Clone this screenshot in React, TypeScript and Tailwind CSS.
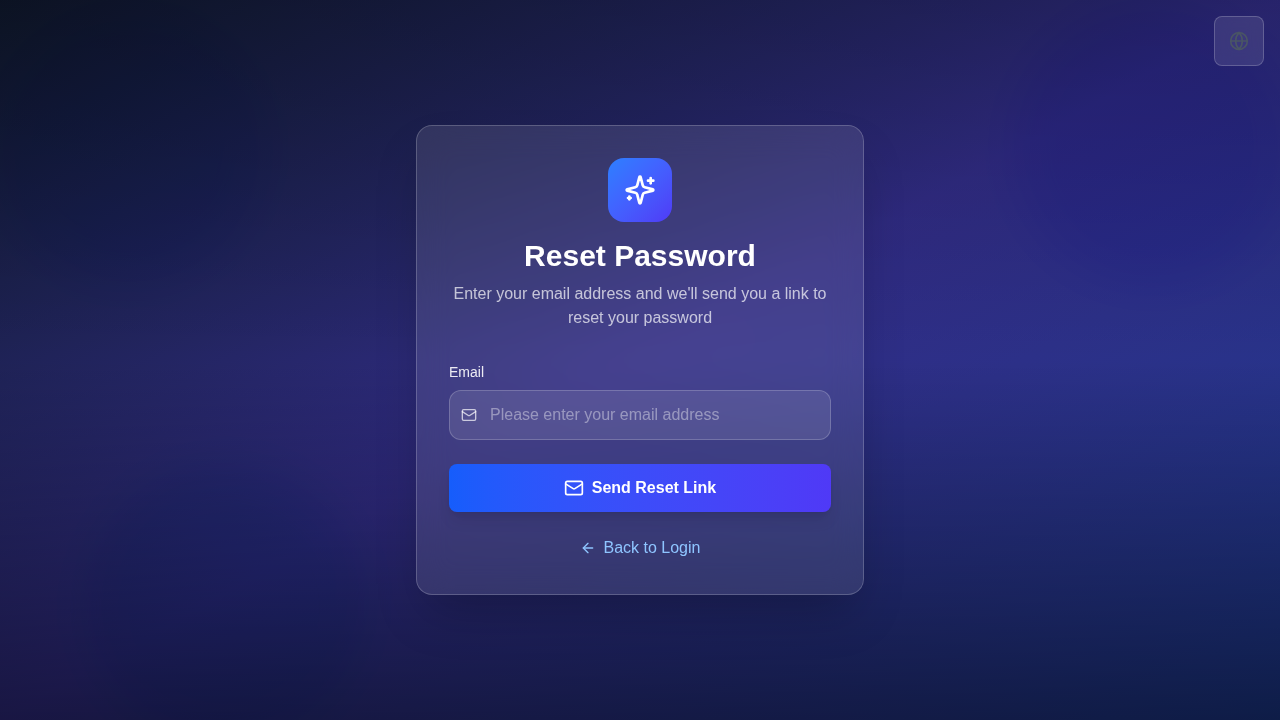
import { useState } from "react";
import { ArrowLeft, Globe, Mail } from "lucide-react";

function SparklesIcon() {
  return (
    <svg
      className="h-8 w-8 text-white"
      viewBox="0 0 24 24"
      fill="none"
      stroke="currentColor"
      strokeWidth={2}
      strokeLinecap="round"
      strokeLinejoin="round"
      aria-hidden="true"
    >
      <path d="M9.937 15.5A2 2 0 0 0 8.5 14.063l-6.135-1.582a.5.5 0 0 1 0-.962L8.5 9.936A2 2 0 0 0 9.937 8.5l1.582-6.135a.5.5 0 0 1 .963 0L14.063 8.5A2 2 0 0 0 15.5 9.937l6.135 1.581a.5.5 0 0 1 0 .964L15.5 14.063a2 2 0 0 0-1.437 1.437l-1.582 6.135a.5.5 0 0 1-.963 0z" />
      <path d="M20 3v4" />
      <path d="M22 5h-4" />
      <path d="M4 17v2" />
      <path d="M5 18H3" />
    </svg>
  );
}

function Backdrop() {
  return (
    <div className="absolute inset-0 overflow-hidden" aria-hidden="true">
      <div className="absolute inset-0 bg-linear-to-br from-slate-900 via-indigo-900 to-blue-900" />
      <div className="absolute inset-0 bg-linear-to-t from-black/50 via-transparent to-black/20" />
      <div className="absolute top-0 -left-4 h-72 w-72 rounded-full bg-blue-500 opacity-20 mix-blend-multiply blur-xl" />
      <div className="absolute top-0 -right-4 h-72 w-72 rounded-full bg-indigo-500 opacity-20 mix-blend-multiply blur-xl" />
      <div className="absolute -bottom-8 left-20 h-72 w-72 rounded-full bg-cyan-500 opacity-20 mix-blend-multiply blur-xl" />
    </div>
  );
}

export default function App() {
  const [email, setEmail] = useState("");

  return (
    <div className="relative flex min-h-screen items-center justify-center p-4 font-['Liberation_Sans',Arial,sans-serif]">
      <Backdrop />

      <button
        type="button"
        aria-label="Change language"
        className="absolute top-4 right-4 z-10 rounded-lg border border-white/20 bg-white/10 p-3.5 text-gray-600 backdrop-blur-sm"
      >
        <Globe size={20} />
      </button>

      <main className="relative w-full max-w-md rounded-2xl border border-white/20 bg-white/10 p-8 shadow-2xl backdrop-blur-lg">
        <header className="mb-8 text-center">
          <div className="mx-auto mb-4 flex h-16 w-16 items-center justify-center rounded-2xl bg-linear-to-br from-blue-500 to-indigo-600">
            <SparklesIcon />
          </div>
          <h1 className="mb-2 text-3xl font-bold text-white">Reset Password</h1>
          <p className="text-white/70">
            Enter your email address and we'll send you a link to reset your password
          </p>
        </header>

        <form className="space-y-6" onSubmit={(event) => event.preventDefault()}>
          <div>
            <label htmlFor="email" className="mb-2 block text-sm text-white/90">
              Email
            </label>
            <div className="relative">
              <Mail size={16} className="absolute inset-y-0 left-3 my-auto text-white/70" />
              <input
                id="email"
                type="email"
                value={email}
                onChange={(event) => setEmail(event.target.value)}
                placeholder="Please enter your email address"
                className="block w-full rounded-xl border border-white/20 bg-white/10 py-3 pr-4 pl-10 text-white placeholder:text-white/40 focus:outline-none"
              />
            </div>
          </div>

          <button
            type="submit"
            className="flex w-full items-center justify-center gap-2 rounded-lg bg-linear-to-r from-blue-600 to-indigo-600 px-4 py-3 font-semibold text-white shadow-lg"
          >
            <Mail size={20} />
            Send Reset Link
          </button>
        </form>

        <div className="mt-6 pb-0.5 text-center">
          <a href="#login" className="flex items-center justify-center gap-2 text-blue-300">
            <ArrowLeft size={16} />
            Back to Login
          </a>
        </div>
      </main>
    </div>
  );
}
